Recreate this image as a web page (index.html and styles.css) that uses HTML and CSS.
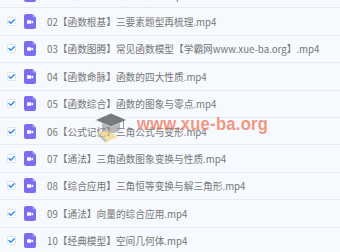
FILE: index.html
```html
<!DOCTYPE html>
<html lang="zh">
<head>
<meta charset="utf-8">
<link rel="stylesheet" href="styles.css">
</head>
<body>
<svg width="0" height="0" class="defs">
  <defs>
    <symbol id="vid" viewBox="0 0 12 15">
      <path d="M2 0H8.5L12 3.5V13A2 2 0 0 1 10 15H2A2 2 0 0 1 0 13V2A2 2 0 0 1 2 0Z" fill="#7a6ef0"/>
      <path d="M8.5 0V2.5A1 1 0 0 0 9.5 3.5H12Z" fill="#a79ff6"/>
      <rect x="3" y="6.2" width="4.2" height="3.6" rx="0.6" fill="#fff"/>
      <path d="M7.2 7.6L9.2 6.4V9.6L7.2 8.4Z" fill="#fff"/>
    </symbol>
    <symbol id="chk" viewBox="0 0 9 9">
      <rect x="0.5" y="0.5" width="8" height="8" rx="1" fill="#fff" stroke="#dde4ee"/>
      <path d="M2 4.6L3.8 6.3L7.2 2.7" fill="none" stroke="#2d8cf0" stroke-width="1.4" stroke-linecap="round" stroke-linejoin="round"/>
    </symbol>
  </defs>
</svg>
<div class="list">
  <div class="row"><svg class="cb"><use href="#chk"/></svg><svg class="fi"><use href="#vid"/></svg><span class="name">01【函数入门】函数的概念.mp4</span></div>
  <div class="row"><svg class="cb"><use href="#chk"/></svg><svg class="fi"><use href="#vid"/></svg><span class="name">02【函数根基】三要素题型再梳理.mp4</span></div>
  <div class="row"><svg class="cb"><use href="#chk"/></svg><svg class="fi"><use href="#vid"/></svg><span class="name">03【函数图腾】常见函数模型【学霸网www.xue-ba.org】.mp4</span></div>
  <div class="row"><svg class="cb"><use href="#chk"/></svg><svg class="fi"><use href="#vid"/></svg><span class="name">04【函数命脉】函数的四大性质.mp4</span></div>
  <div class="row"><svg class="cb"><use href="#chk"/></svg><svg class="fi"><use href="#vid"/></svg><span class="name">05【函数综合】函数的图象与零点.mp4</span></div>
  <div class="row"><svg class="cb"><use href="#chk"/></svg><svg class="fi"><use href="#vid"/></svg><span class="name">06【公式记忆】三角公式与变形.mp4</span></div>
  <div class="row"><svg class="cb"><use href="#chk"/></svg><svg class="fi"><use href="#vid"/></svg><span class="name">07【通法】三角函数图象变换与性质.mp4</span></div>
  <div class="row"><svg class="cb"><use href="#chk"/></svg><svg class="fi"><use href="#vid"/></svg><span class="name">08【综合应用】三角恒等变换与解三角形.mp4</span></div>
  <div class="row"><svg class="cb"><use href="#chk"/></svg><svg class="fi"><use href="#vid"/></svg><span class="name">09【通法】向量的综合应用.mp4</span></div>
  <div class="row"><svg class="cb"><use href="#chk"/></svg><svg class="fi"><use href="#vid"/></svg><span class="name">10【经典模型】空间几何体.mp4</span></div>
</div>
<div class="watermark">
  <svg class="cap" viewBox="0 0 32 32">
    <path d="M1 8L16 1.5L31 8L16 14.5Z" fill="#5a5a5a" opacity="0.8"/>
    <path d="M7 11V17C7 19.5 11.5 21 16 21C20.5 21 25 19.5 25 17V11L16 15Z" fill="#8c8c8c" opacity="0.6"/>
    <path d="M28.5 9V16" stroke="#5a5a5a" stroke-width="1" opacity="0.6"/>
    <path d="M2 22L10 31L22 25L13 18Z" fill="#f3cf7a" opacity="0.65"/>
    <path d="M4 23L11 29" stroke="#6fb0e8" stroke-width="2" opacity="0.55"/>
  </svg>
  <span class="wm-text">www.xue-ba.org</span>
</div>
</body>
</html>
```
FILE: styles.css
```css
html, body {
  margin: 0;
  padding: 0;
  background: #f6f9fd;
  overflow: hidden;
}
body {
  width: 340px;
  height: 252px;
  position: relative;
  font-family: "Noto Sans CJK SC", "Noto Sans", sans-serif;
}
.defs {
  position: absolute;
}
.list {
  margin-top: -19px;
  display: flex;
  flex-direction: column;
}
.row {
  height: 27.4px;
  box-sizing: border-box;
  border-bottom: 1px solid #e2ebf4;
  display: flex;
  align-items: center;
  padding-left: 7px;
}
.cb {
  width: 9px;
  height: 9px;
  flex: none;
}
.fi {
  width: 12px;
  height: 15px;
  margin-left: 8px;
  flex: none;
}
.name {
  margin-left: 11px;
  padding-top: 1px;
  font-size: 9.7px;
  color: #777777;
  white-space: nowrap;
}
.watermark {
  position: absolute;
  left: 95px;
  top: 112px;
  display: flex;
  align-items: flex-start;
}
.cap {
  width: 32px;
  height: 32px;
}
.wm-text {
  margin-left: 10px;
  margin-top: 3px;
  font-family: "Liberation Sans", sans-serif;
  font-weight: bold;
  font-size: 18px;
  line-height: 18px;
  color: rgba(240, 112, 80, 0.72);
  transform: scaleX(0.92);
  transform-origin: left center;
  letter-spacing: 0.3px;
}
```
